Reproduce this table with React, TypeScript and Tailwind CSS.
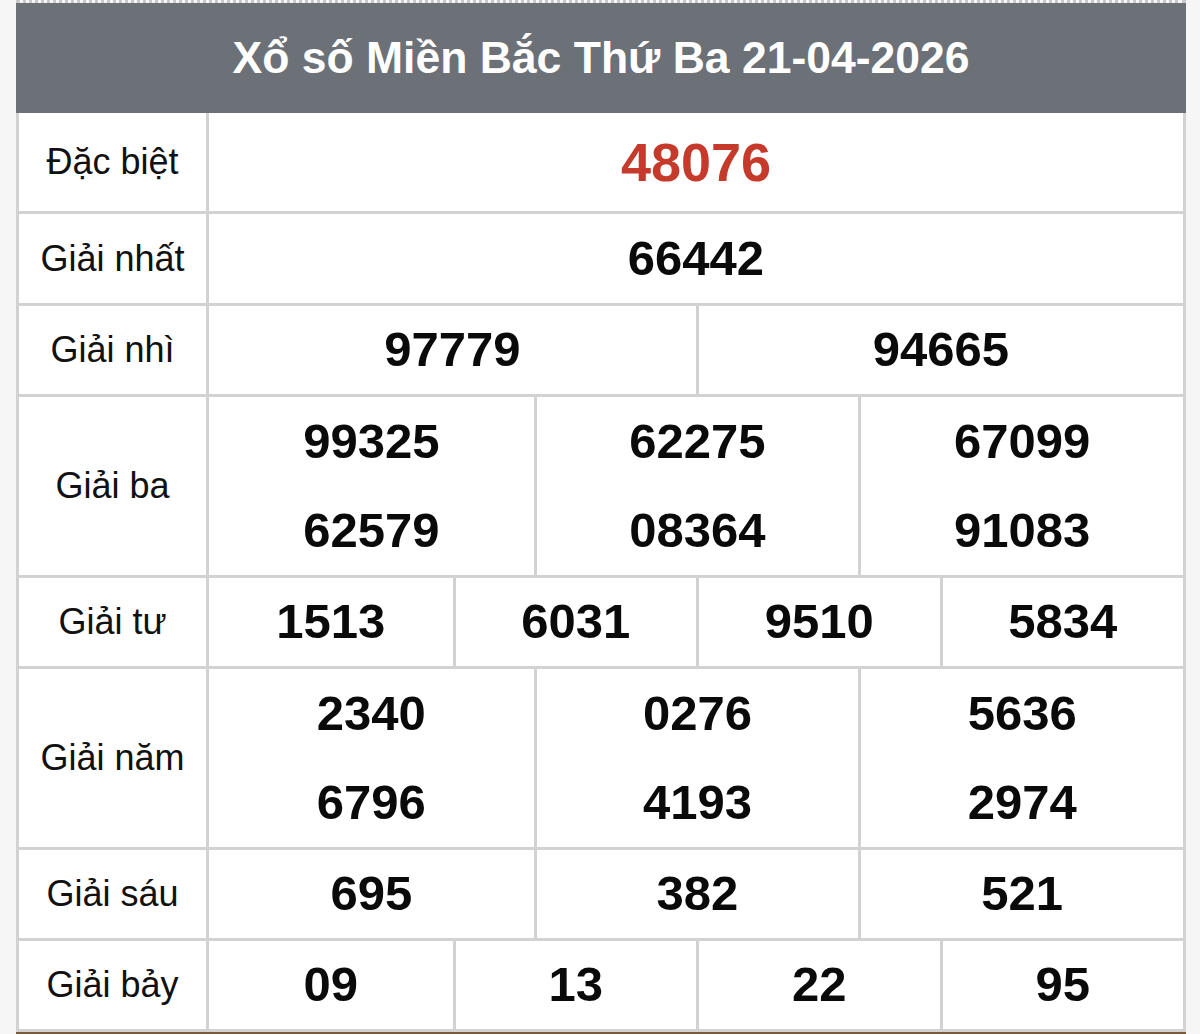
const rows: { label: string; cols: number; values: string[]; h: string; special?: boolean }[] = [
  { label: 'Đặc biệt', cols: 1, values: ['48076'], h: 'h-[98px]', special: true },
  { label: 'Giải nhất', cols: 1, values: ['66442'], h: 'h-[89px]' },
  { label: 'Giải nhì', cols: 2, values: ['97779', '94665'], h: 'h-[88px]' },
  { label: 'Giải ba', cols: 3, values: ['99325', '62275', '67099', '62579', '08364', '91083'], h: 'h-[89px]' },
  { label: 'Giải tư', cols: 4, values: ['1513', '6031', '9510', '5834'], h: 'h-[88px]' },
  { label: 'Giải năm', cols: 3, values: ['2340', '0276', '5636', '6796', '4193', '2974'], h: 'h-[89px]' },
  { label: 'Giải sáu', cols: 3, values: ['695', '382', '521'], h: 'h-[88px]' },
  { label: 'Giải bảy', cols: 4, values: ['09', '13', '22', '95'], h: 'h-[88px]' },
]

const gridCols: Record<number, string> = {
  1: 'grid-cols-1',
  2: 'grid-cols-2',
  3: 'grid-cols-3',
  4: 'grid-cols-4',
}

function PrizeRow({ row }: { row: (typeof rows)[number] }) {
  // two-line rows keep numbers stacked inside the same column
  const perCol = row.values.length / row.cols
  const columns = Array.from({ length: row.cols }, (_, c) =>
    Array.from({ length: perCol }, (_, i) => row.values[c + i * row.cols]),
  )

  return (
    <div className="flex border-b-[3px] border-[#d2d2d2]">
      <div className="flex w-[190px] shrink-0 items-center justify-center border-r-[3px] border-[#d2d2d2] text-[36px] text-[#111]">
        {row.label}
      </div>
      <div className={`grid flex-1 ${gridCols[row.cols]}`}>
        {columns.map((col, c) => (
          <div
            key={c}
            className={`flex flex-col ${c > 0 ? 'border-l-[3px] border-[#d2d2d2]' : ''}`}
          >
            {col.map((v, i) => (
              <div
                key={i}
                className={`flex ${row.h} items-center justify-center font-bold ${
                  row.special ? 'text-[54px] text-[#c63a2b]' : 'text-[49px] text-[#0a0a0a]'
                }`}
              >
                {v}
              </div>
            ))}
          </div>
        ))}
      </div>
    </div>
  )
}

export default function App() {
  return (
    <div className="h-[1034px] overflow-hidden bg-[#f6f6f7] pl-[16px] pr-[14px] font-['Liberation_Sans',Arial,sans-serif]">
      <div className="border-t-[3px] border-dotted border-[#c9c9c9]">
        <div className="flex h-[110px] items-center justify-center bg-[#6c7077] text-[44.5px] font-bold text-white">
          Xổ số Miền Bắc Thứ Ba 21-04-2026
        </div>
        <div className="border-x-[3px] border-[#d2d2d2] bg-white">
          {rows.map((row) => (
            <PrizeRow key={row.label} row={row} />
          ))}
        </div>
        <div className="h-[3px] bg-[#7a5a37]" />
      </div>
    </div>
  )
}
